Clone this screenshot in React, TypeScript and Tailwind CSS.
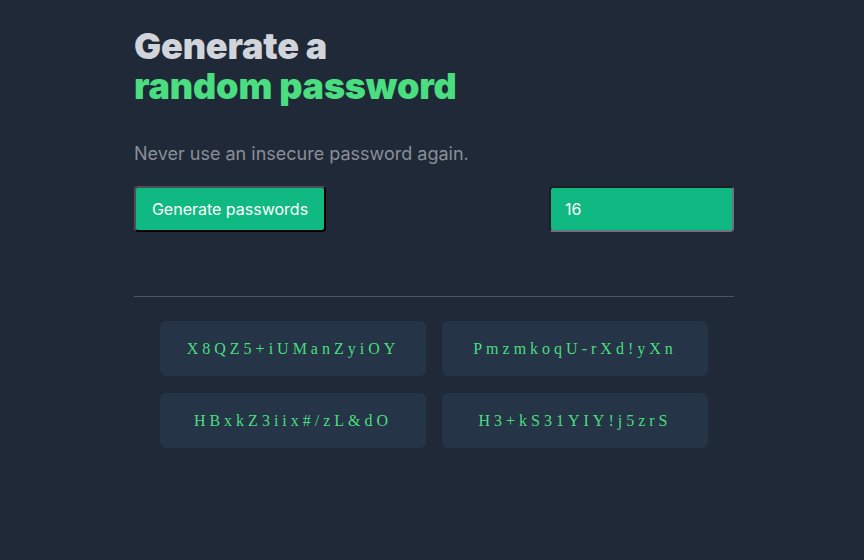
import React from "react";

const passwords = [
  "X8QZ5+iUManZyiOY",
  "PmzmkoqU-rXd!yXn",
  "HBxkZ3iix#/zL&dO",
  "H3+kS31YIY!j5zrS",
];

export default function App() {
  return (
    <div className="min-h-[560px] w-full bg-[#1f2937] font-['Inter',sans-serif]">
      <div className="ml-[134px] w-[600px] pt-[26px]">
        <h1 className="text-[36px] leading-[40px] font-black tracking-[-0.005em] text-[#d1d5db]">
          Generate a
          <br />
          <span className="text-[#4ade80]">random password</span>
        </h1>
        <p className="mt-[34px] text-[18px] leading-[28px] text-[#8a8f98]">
          Never use an insecure password again.
        </p>
        <div className="mt-[18px] flex items-center justify-between">
          <button className="h-[46px] w-[192px] rounded-[4px] border-2 border-t-[#4b5055] border-l-[#4b5055] border-b-black border-r-black bg-[#10b981] text-[16px] text-white">
            Generate passwords
          </button>
          <input
            className="h-[46px] w-[185px] rounded-[4px] border-2 border-t-[#1a1f26] border-l-[#1a1f26] border-b-[#6b7280] border-r-[#6b7280] bg-[#10b981] px-[14px] text-[16px] text-white outline-none"
            defaultValue="16"
            type="text"
          />
        </div>
        <div className="mt-[64px] h-px w-full bg-[#4b5563]" />
        <div className="mt-[24px] flex justify-center">
          <div className="grid grid-cols-[266px_266px] gap-x-[16px] gap-y-[17px]">
            {passwords.map((p) => (
              <div
                key={p}
                className="flex h-[55px] items-center justify-center rounded-[6px] bg-[#253446] font-['Liberation_Serif',serif] text-[16px] tracking-[0.25em] text-[#4ade80]"
              >
                {p}
              </div>
            ))}
          </div>
        </div>
      </div>
    </div>
  );
}
